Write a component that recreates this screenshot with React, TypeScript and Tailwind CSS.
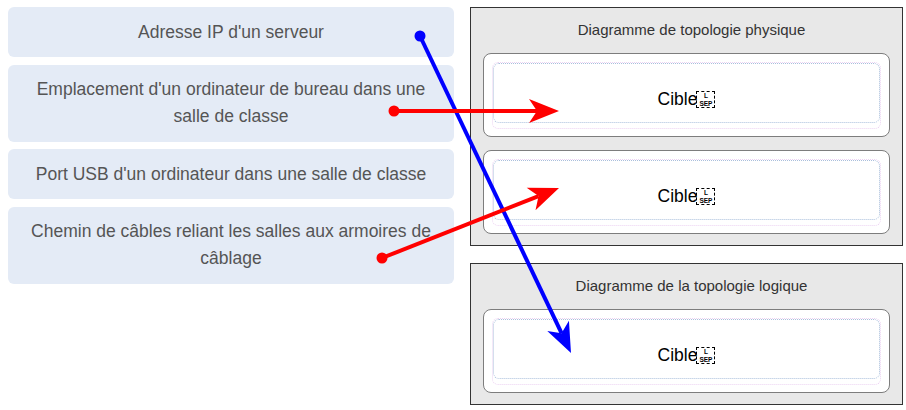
import React from "react";

const items = [
  "Adresse IP d'un serveur",
  "Emplacement d'un ordinateur de bureau dans une salle de classe",
  "Port USB d'un ordinateur dans une salle de classe",
  "Chemin de câbles reliant les salles aux armoires de câblage",
];

const arrows = [
  { from: [420, 36], to: [571, 353], color: "#0000ff" },
  { from: [394, 111], to: [559, 111], color: "#ff0000" },
  { from: [382, 258], to: [559, 188], color: "#ff0000" },
];

// arrowhead polygon with a notch at the back
const head = (from: number[], to: number[]) => {
  const dx = to[0] - from[0];
  const dy = to[1] - from[1];
  const len = Math.hypot(dx, dy);
  const ux = dx / len;
  const uy = dy / len;
  const px = -uy;
  const py = ux;
  const L = 30;
  const W = 12;
  const N = 22;
  const bx = to[0] - ux * L;
  const by = to[1] - uy * L;
  const pts = [
    [to[0], to[1]],
    [bx + px * W, by + py * W],
    [to[0] - ux * N, to[1] - uy * N],
    [bx - px * W, by - py * W],
  ];
  return pts.map((p) => p.join(",")).join(" ");
};

const SepGlyph = () => (
  <span className="inline-flex flex-col items-center justify-between w-[19px] h-[17px] mt-[2px] -ml-px border border-dashed border-black text-[6.5px] font-bold leading-[7px] text-black">
    <span>L</span>
    <span>SEP</span>
  </span>
);

const Target = () => (
  <div className="h-[84px] rounded-lg border border-[#7d7d7d] bg-white p-2">
    <div className="h-[67px] rounded-md border border-dotted border-[#ecd2f2]">
      <div className="h-[60px] rounded-md border border-dotted border-[#a9bfdc] flex justify-center pt-[25px]">
        <span className="text-[17.5px] leading-[21px] text-black flex items-start">
          Cible
          <SepGlyph />
        </span>
      </div>
    </div>
  </div>
);

const Zone = ({ title, count }: { title: string; count: number }) => (
  <div className="border border-[#333] bg-[#e8e8e8] px-3 pt-3 pb-[11px]">
    <div className="text-[15px] leading-5 text-[#333] text-center pl-[10px] mb-[13px]">{title}</div>
    <div className="flex flex-col gap-[13px]">
      {Array.from({ length: count }).map((_, i) => (
        <Target key={i} />
      ))}
    </div>
  </div>
);

export default function App() {
  return (
    <div className="relative w-[906px] h-[410px] bg-white overflow-hidden font-['Liberation_Sans',Arial,sans-serif]">
      <div className="flex gap-4 pl-2 pt-[7px]">
        <div className="w-[446px] flex flex-col gap-[7.5px]">
          {items.map((t) => (
            <div
              key={t}
              className="rounded-md bg-[#e4ebf6] px-4 py-[11.5px] text-center text-[17.5px] leading-[27px] text-[#555]"
            >
              {t}
            </div>
          ))}
        </div>
        <div className="w-[433px] flex flex-col gap-[17px]">
          <Zone title="Diagramme de topologie physique" count={2} />
          <Zone title="Diagramme de la topologie logique" count={1} />
        </div>
      </div>

      <svg className="absolute inset-0 pointer-events-none" width="906" height="410">
        {arrows.map((a, i) => {
          const dx = a.to[0] - a.from[0];
          const dy = a.to[1] - a.from[1];
          const len = Math.hypot(dx, dy);
          const ex = a.to[0] - (dx / len) * 22;
          const ey = a.to[1] - (dy / len) * 22;
          return (
            <g key={i}>
              <line x1={a.from[0]} y1={a.from[1]} x2={ex} y2={ey} stroke={a.color} strokeWidth="4" />
              <circle cx={a.from[0]} cy={a.from[1]} r="5.5" fill={a.color} />
              <polygon points={head(a.from, a.to)} fill={a.color} />
            </g>
          );
        })}
      </svg>
    </div>
  );
}
